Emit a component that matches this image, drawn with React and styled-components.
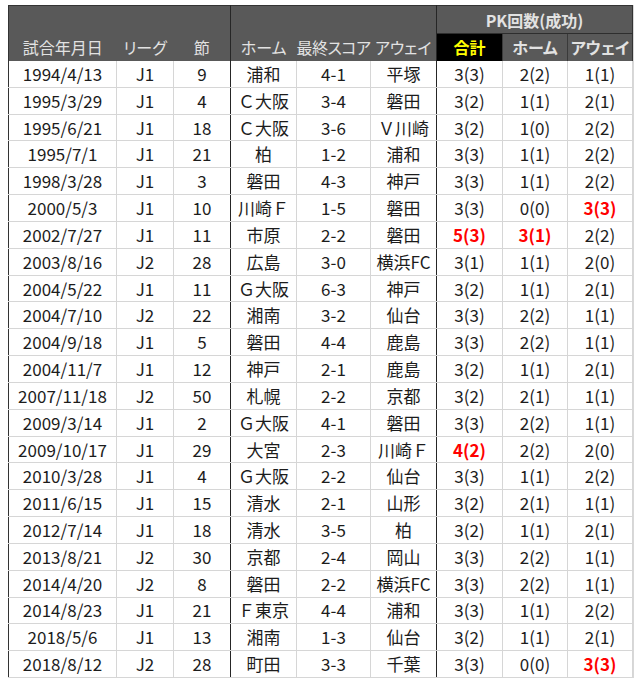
import React from "react";
import styled, { createGlobalStyle, css } from "styled-components";

const Global = createGlobalStyle`
  html, body { background: #ffffff; }
  body {
    margin: 5px 0 0 8px;
    font-family: "Noto Sans CJK JP", "Noto Sans", sans-serif;
  }
`;

const Table = styled.table`
  border-collapse: collapse;
  table-layout: fixed;
  width: 624px;
  border: 1px solid #333333;
  box-shadow: 0 0 0 1px #d8d8d8;
`;

const HeadCell = styled.th`
  background: ${(p) => (p.$black ? "#000000" : "#595959")};
  color: ${(p) => (p.$black ? "#ffff00" : "#e2e2e2")};
  font-size: 16px;
  font-weight: ${(p) => (p.$bold ? 700 : 400)};
  font-feature-settings: "palt";
  letter-spacing: ${(p) => (p.$tight ? "-0.5px" : "0")};
  text-align: center;
  vertical-align: ${(p) => (p.$bottom ? "bottom" : "middle")};
  padding: 0 0 ${(p) => (p.$bottom ? "2px" : "0")} 0;
  line-height: 24px;
  white-space: nowrap;
  border-right: ${(p) => (p.$divider ? "1px solid #262626" : "none")};
  ${(p) =>
    p.$sub &&
    css`
      border-top: 1px solid #2e2e2e;
      border-left: 1px solid #3a3a3a;
    `}
`;

const TopRow = styled.tr`
  height: 28px;
`;

const SubRow = styled.tr`
  height: 27px;
`;

const Row = styled.tr`
  height: 26.83px;
`;

const Cell = styled.td`
  font-size: 17px;
  color: ${(p) => (p.$red ? "#ff0000" : "#1c1c1c")};
  font-weight: ${(p) => (p.$red ? 700 : 400)};
  text-align: center;
  vertical-align: middle;
  padding: 0;
  line-height: 20px;
  white-space: nowrap;
  border-bottom: 1px solid #d6d6d6;
  border-right: 1px solid ${(p) => (p.$divider ? "#262626" : "#d6d6d6")};
`;

const widths = [108, 57, 57, 66, 74, 66, 66, 65, 65];

const rows = [
  ["1994/4/13", "J1", "9", "浦和", "4-1", "平塚", "3(3)", "2(2)", "1(1)"],
  ["1995/3/29", "J1", "4", "Ｃ大阪", "3-4", "磐田", "3(2)", "1(1)", "2(1)"],
  ["1995/6/21", "J1", "18", "Ｃ大阪", "3-6", "Ｖ川崎", "3(2)", "1(0)", "2(2)"],
  ["1995/7/1", "J1", "21", "柏", "1-2", "浦和", "3(3)", "1(1)", "2(2)"],
  ["1998/3/28", "J1", "3", "磐田", "4-3", "神戸", "3(3)", "1(1)", "2(2)"],
  ["2000/5/3", "J1", "10", "川崎Ｆ", "1-5", "磐田", "3(3)", "0(0)", "!3(3)"],
  ["2002/7/27", "J1", "11", "市原", "2-2", "磐田", "!5(3)", "!3(1)", "2(2)"],
  ["2003/8/16", "J2", "28", "広島", "3-0", "横浜FC", "3(1)", "1(1)", "2(0)"],
  ["2004/5/22", "J1", "11", "Ｇ大阪", "6-3", "神戸", "3(2)", "1(1)", "2(1)"],
  ["2004/7/10", "J2", "22", "湘南", "3-2", "仙台", "3(3)", "2(2)", "1(1)"],
  ["2004/9/18", "J1", "5", "磐田", "4-4", "鹿島", "3(3)", "2(2)", "1(1)"],
  ["2004/11/7", "J1", "12", "神戸", "2-1", "鹿島", "3(2)", "1(1)", "2(1)"],
  ["2007/11/18", "J2", "50", "札幌", "2-2", "京都", "3(2)", "2(1)", "1(1)"],
  ["2009/3/14", "J1", "2", "Ｇ大阪", "4-1", "磐田", "3(3)", "2(2)", "1(1)"],
  ["2009/10/17", "J1", "29", "大宮", "2-3", "川崎Ｆ", "!4(2)", "2(2)", "2(0)"],
  ["2010/3/28", "J1", "4", "Ｇ大阪", "2-2", "仙台", "3(3)", "1(1)", "2(2)"],
  ["2011/6/15", "J1", "15", "清水", "2-1", "山形", "3(2)", "2(1)", "1(1)"],
  ["2012/7/14", "J1", "18", "清水", "3-5", "柏", "3(2)", "1(1)", "2(1)"],
  ["2013/8/21", "J2", "30", "京都", "2-4", "岡山", "3(3)", "2(2)", "1(1)"],
  ["2014/4/20", "J2", "8", "磐田", "2-2", "横浜FC", "3(3)", "2(2)", "1(1)"],
  ["2014/8/23", "J1", "21", "Ｆ東京", "4-4", "浦和", "3(3)", "1(1)", "2(2)"],
  ["2018/5/6", "J1", "13", "湘南", "1-3", "仙台", "3(2)", "1(1)", "2(1)"],
  ["2018/8/12", "J2", "28", "町田", "3-3", "千葉", "3(3)", "0(0)", "!3(3)"],
];

const leftHeads = ["試合年月日", "リーグ", "節", "ホーム", "最終スコア", "アウェイ"];

export default function App() {
  return (
    <>
      <Global />
      <Table>
        <colgroup>
          {widths.map((w, i) => (
            <col key={i} style={{ width: w }} />
          ))}
        </colgroup>
        <thead>
          <TopRow>
            {leftHeads.map((h, i) => (
              <HeadCell
                key={h}
                rowSpan={2}
                $bottom
                $tight={i === 4}
                $divider={i === 2 || i === 5}
              >
                {h}
              </HeadCell>
            ))}
            <HeadCell colSpan={3} $bold>
              PK回数(成功)
            </HeadCell>
          </TopRow>
          <SubRow>
            <HeadCell $black $bold $sub>
              合計
            </HeadCell>
            <HeadCell $bold $sub>
              ホーム
            </HeadCell>
            <HeadCell $bold $sub>
              アウェイ
            </HeadCell>
          </SubRow>
        </thead>
        <tbody>
          {rows.map((r) => (
            <Row key={r[0]}>
              {r.map((v, i) => {
                const red = v.startsWith("!");
                return (
                  <Cell key={i} $red={red} $divider={i === 2 || i === 5}>
                    {red ? v.slice(1) : v}
                  </Cell>
                );
              })}
            </Row>
          ))}
        </tbody>
      </Table>
    </>
  );
}
